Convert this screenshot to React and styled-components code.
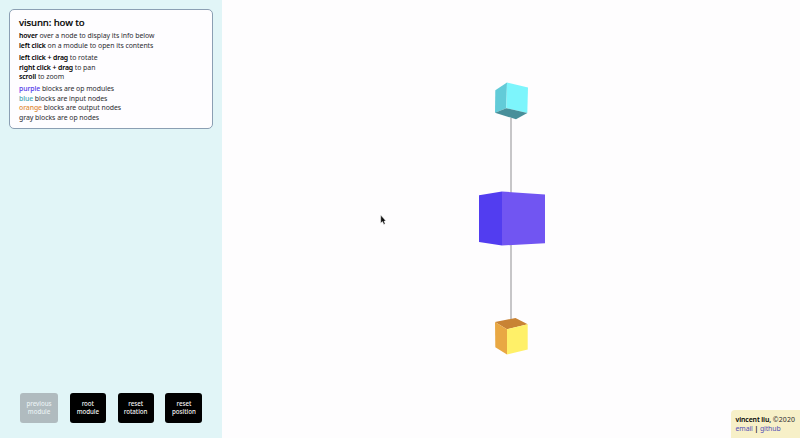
import React from 'react';
import styled, { createGlobalStyle } from 'styled-components';

const GlobalStyle = createGlobalStyle`
  * { box-sizing: border-box; }
  body { margin: 0; font-family: "Noto Sans", "Open Sans", sans-serif; color: #2b2b30; }
`;

const Page = styled.div`
  display: flex;
  width: 800px;
  height: 438px;
  overflow: hidden;
  background: #fefdfe;
`;

const Sidebar = styled.aside`
  display: flex;
  flex-direction: column;
  justify-content: space-between;
  width: 222px;
  height: 100%;
  padding: 9px 9px 15px;
  background: #e1f5f7;
`;

const HelpCard = styled.section`
  height: 120px;
  padding: 5.5px 9px;
  background: #fefdff;
  border: 1px solid #8b9fb3;
  border-radius: 5px;
`;

const Title = styled.h1`
  margin: 0 0 2.9px;
  font-size: 9.6px;
  line-height: 13px;
  font-weight: 500;
  letter-spacing: -0.1px;
  color: #000;
  -webkit-text-stroke: 0.15px #000;
`;

const Group = styled.div`
  margin-bottom: 3px;
`;

const Line = styled.p`
  margin: 0;
  font-size: 6.9px;
  line-height: 9.4px;
  letter-spacing: -0.03px;
  white-space: nowrap;
`;

const Strong = styled.b`
  font-weight: 600;
  letter-spacing: -0.12px;
  color: #000;
`;

const Tint = styled.span`
  color: ${({ $color }) => $color};
  font-weight: ${({ $weight }) => $weight || 500};
  letter-spacing: -0.08px;
`;

const Actions = styled.nav`
  display: flex;
  gap: 11.8px;
  padding-left: 11px;
`;

const ActionButton = styled.button`
  width: ${({ $width }) => $width || 36}px;
  height: 30px;
  padding: 0;
  border: 0;
  border-radius: 3px;
  background: #000;
  color: #f4f4f4;
  font: 500 6.2px/8px "Noto Sans", sans-serif;
  letter-spacing: -0.04px;
  text-align: center;
  &:disabled {
    background: #b0bbbf;
    color: #e9f1f3;
  }
`;

const Viewport = styled.main`
  position: relative;
  flex: 1;
`;

const Scene = styled.svg`
  display: block;
`;

const Credits = styled.footer`
  position: absolute;
  right: 0;
  bottom: 0;
  width: 69px;
  height: 28px;
  padding: 4.5px 0 0 4.6px;
  border-top-left-radius: 4px;
  background: #f7f0c8;
`;

const Copyright = styled.span`
  letter-spacing: 0.2px;
`;

const Link = styled.a`
  color: #5451b5;
  letter-spacing: -0.12px;
`;

export default function App() {
  return (
    <Page>
      <GlobalStyle />
      <Sidebar>
        <HelpCard>
          <Title>visunn: how to</Title>
          <Group>
            <Line><Strong>hover</Strong> over a node to display its info below</Line>
            <Line><Strong>left click</Strong> on a module to open its contents</Line>
          </Group>
          <Group>
            <Line><Strong>left click + drag</Strong> to rotate</Line>
            <Line><Strong>right click + drag</Strong> to pan</Line>
            <Line><Strong>scroll</Strong> to zoom</Line>
          </Group>
          <Group>
            <Line><Tint $color="#5136e8" $weight={500}>purple</Tint> blocks are op modules</Line>
            <Line><Tint $color="#45a6b4">blue</Tint> blocks are input nodes</Line>
            <Line><Tint $color="#df8b35">orange</Tint> blocks are output nodes</Line>
            <Line><Tint $color="#3f4248">gray</Tint> blocks are op nodes</Line>
          </Group>
        </HelpCard>
        <Actions>
          <ActionButton $width={38} disabled>previous<br />module</ActionButton>
          <ActionButton>root<br />module</ActionButton>
          <ActionButton>reset<br />rotation</ActionButton>
          <ActionButton $width={37}>reset<br />position</ActionButton>
        </Actions>
      </Sidebar>
      <Viewport>
        <Scene width="578" height="438" viewBox="222 0 578 438">
          <path d="M511 118V193M511 244V320" stroke="#b5b4b6" strokeWidth="1.5" />
          <path d="M507 82.5L495.3 90.2L495 112.7L506.3 108.2Z" fill="#62cbd8" />
          <path d="M507 82.5L528 87.5L527.3 113L506.3 108.2Z" fill="#7df5fc" />
          <path d="M495 112.7L506.3 108.2L527.3 113L516 119.3Z" fill="#488f9a" />
          <path d="M502 191.5L479 195.3V242L502 245.5Z" fill="#523df0" />
          <path d="M502 191.5L545 194.5V243.2L502 245.5Z" fill="#7155f2" />
          <path d="M495 322L515.5 318L527.7 324.3L507 329.3Z" fill="#c88334" />
          <path d="M495 322L507 329.3V354.5L495.3 347.2Z" fill="#e9a843" />
          <path d="M507 329.3L527.7 324.3V349.6L507 354.5Z" fill="#fff068" />
          <path d="M380.7 215V223.2L382.5 221.6L383.8 224.4L385.2 223.7L384 221.1H386Z" fill="#111" stroke="#fff" strokeWidth=".5" />
        </Scene>
        <Credits>
          <Line><Strong>vincent liu,</Strong> <Copyright>©2020</Copyright></Line>
          <Line><Link>email</Link> <Strong>|</Strong> <Link>github</Link></Line>
        </Credits>
      </Viewport>
    </Page>
  );
}
